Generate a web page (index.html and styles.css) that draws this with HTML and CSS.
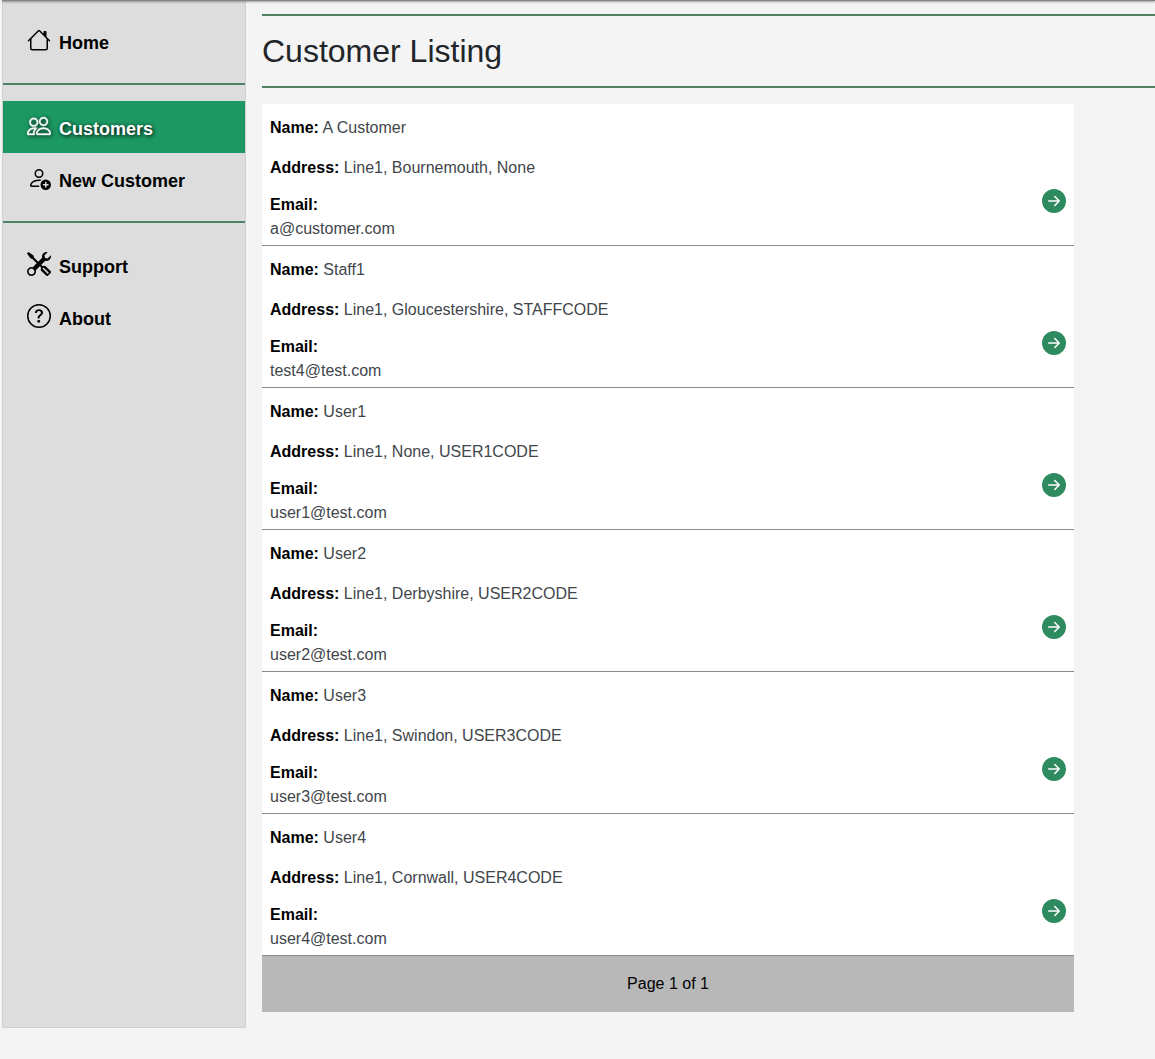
FILE: index.html
```html
<!DOCTYPE html>
<html lang="en">
<head>
<meta charset="utf-8">
<title>Customer Listing</title>
<link rel="stylesheet" href="styles.css">
</head>
<body>
<svg class="sprite" aria-hidden="true">
  <symbol id="arrow" viewBox="0 0 16 16"><path d="M8 0a8 8 0 1 1 0 16A8 8 0 0 1 8 0zM4.500 7.500a.5.5 0 0 0 0 1h5.793l-2.147 2.146a.5.5 0 0 0 .708.708l3-3a.5.5 0 0 0 0-.708l-3-3a.5.5 0 1 0-.708.708L10.293 7.500H4.500z"/></symbol>
</svg>
<div class="topbar"></div>
<div class="layout">
  <nav class="sidebar">
    <a class="nav-item"><svg class="icon" viewBox="0 0 16 16"><path d="M8.707 1.5a1 1 0 0 0-1.414 0L.646 8.146a.5.5 0 0 0 .708.708L2 8.207V13.500A1.500 1.500 0 0 0 3.500 15h9a1.500 1.500 0 0 0 1.500-1.500V8.207l.646.647a.5.5 0 0 0 .708-.708L13 5.793V2.500a.5.5 0 0 0-.5-.5h-1a.5.5 0 0 0-.5.5v1.293L8.707 1.500ZM13 7.207V13.500a.5.5 0 0 1-.5.5h-9a.5.5 0 0 1-.5-.5V7.207l5-5 5 5Z"/></svg><span>Home</span></a>
    <hr class="rule">
    <a class="nav-item active"><svg class="icon" viewBox="0 0 16 16"><path d="M15 14s1 0 1-1-1-4-5-4-5 3-5 4 1 1 1 1h8Zm-7.978-1A.261.261 0 0 1 7 12.996c.001-.264.167-1.030.76-1.720C8.312 10.629 9.282 10 11 10c1.717 0 2.687.63 3.240 1.276.593.69.758 1.457.76 1.720l-.008.002a.274.274 0 0 1-.014.002H7.022ZM11 7a2 2 0 1 0 0-4 2 2 0 0 0 0 4Zm3-2a3 3 0 1 1-6 0 3 3 0 0 1 6 0ZM6.936 9.280a5.880 5.880 0 0 0-1.230-.247A7.350 7.350 0 0 0 5 9c-4 0-5 3-5 4 0 .667.333 1 1 1h4.216A2.238 2.238 0 0 1 5 13c0-1.010.377-2.042 1.090-2.904.243-.294.526-.569.846-.816ZM4.920 10A5.493 5.493 0 0 0 4 13H1c0-.26.164-1.030.76-1.724.545-.636 1.492-1.256 3.160-1.275ZM1.500 5.500a3 3 0 1 1 6 0 3 3 0 0 1-6 0Zm3-2a2 2 0 1 0 0 4 2 2 0 0 0 0-4Z"/></svg><span>Customers</span></a>
    <a class="nav-item"><svg class="icon" viewBox="0 0 16 16"><path d="M12.500 16a3.500 3.500 0 1 0 0-7 3.500 3.500 0 0 0 0 7Zm.5-5v1h1a.5.5 0 0 1 0 1h-1v1a.5.5 0 0 1-1 0v-1h-1a.5.5 0 0 1 0-1h1v-1a.5.5 0 0 1 1 0Zm-2-6a3 3 0 1 1-6 0 3 3 0 0 1 6 0ZM8 7a2 2 0 1 0 0-4 2 2 0 0 0 0 4Z"/><path d="M8.256 14a4.474 4.474 0 0 1-.229-1.004H3c.001-.246.154-.986.832-1.664C4.484 10.680 5.711 10 8 10c.26 0 .507.009.74.025.226-.341.496-.65.804-.918C9.077 9.038 8.564 9 8 9c-5 0-6 3-6 4s1 1 1 1h5.256Z"/></svg><span>New Customer</span></a>
    <hr class="rule">
    <a class="nav-item"><svg class="icon" viewBox="0 0 16 16"><path d="M1 0 0 1l2.200 3.081a1 1 0 0 0 .815.419h.07a1 1 0 0 1 .708.293l2.675 2.675-2.617 2.654A3.003 3.003 0 0 0 0 13a3 3 0 1 0 5.878-.851l2.654-2.617.968.968-.305.914a1 1 0 0 0 .242 1.023l3.270 3.270a.997.997 0 0 0 1.414 0l1.586-1.586a.997.997 0 0 0 0-1.414l-3.270-3.270a1 1 0 0 0-1.023-.242L10.500 9.500l-.96-.96 2.680-2.643A3.005 3.005 0 0 0 16 3c0-.269-.035-.53-.102-.777l-2.140 2.141L12 4l-.364-1.757L13.777.102a3 3 0 0 0-3.675 3.680L7.462 6.460 4.793 3.793a1 1 0 0 1-.293-.707v-.071a1 1 0 0 0-.419-.814L1 0Zm9.646 10.646a.5.5 0 0 1 .708 0l2.914 2.915a.5.5 0 0 1-.707.707l-2.915-2.914a.5.5 0 0 1 0-.708ZM3 11l.471.242.529.026.287.445.445.287.026.529L5 13l-.242.471-.026.529-.445.287-.287.445-.529.026L3 15l-.471-.242L2 14.732l-.287-.445L1.268 14l-.026-.529L1 13l.242-.471.026-.529.445-.287.287-.445.529-.026L3 11Z"/></svg><span>Support</span></a>
    <a class="nav-item"><svg class="icon" viewBox="0 0 16 16"><path d="M8 15A7 7 0 1 1 8 1a7 7 0 0 1 0 14zm0 1A8 8 0 1 0 8 0a8 8 0 0 0 0 16z"/><path d="M5.255 5.786a.237.237 0 0 0 .241.247h.825c.138 0 .248-.113.266-.25.09-.656.54-1.134 1.342-1.134.686 0 1.314.343 1.314 1.168 0 .635-.374.927-.965 1.371-.673.489-1.206 1.060-1.168 1.987l.003.217a.25.25 0 0 0 .25.246h.811a.25.25 0 0 0 .25-.25v-.105c0-.718.273-.927 1.010-1.486.609-.463 1.244-.977 1.244-2.056 0-1.511-1.276-2.241-2.673-2.241-1.267 0-2.655.59-2.750 2.286zm1.557 5.763c0 .533.425.927 1.010.927.609 0 1.028-.394 1.028-.927 0-.552-.42-.94-1.029-.94-.584 0-1.009.388-1.009.94z"/></svg><span>About</span></a>
  </nav>
  <main class="content">
    <header class="page-head"><h1>Customer Listing</h1></header>
    <section class="listing">
      <article class="customer">
        <div><p class="field"><b>Name:</b> A Customer</p><p class="field"><b>Address:</b> Line1, Bournemouth, None</p><p class="email"><b>Email:</b><br>a@customer.com</p></div>
        <svg class="go"><use href="#arrow"/></svg>
      </article>
      <article class="customer">
        <div><p class="field"><b>Name:</b> Staff1</p><p class="field"><b>Address:</b> Line1, Gloucestershire, STAFFCODE</p><p class="email"><b>Email:</b><br>test4@test.com</p></div>
        <svg class="go"><use href="#arrow"/></svg>
      </article>
      <article class="customer">
        <div><p class="field"><b>Name:</b> User1</p><p class="field"><b>Address:</b> Line1, None, USER1CODE</p><p class="email"><b>Email:</b><br>user1@test.com</p></div>
        <svg class="go"><use href="#arrow"/></svg>
      </article>
      <article class="customer">
        <div><p class="field"><b>Name:</b> User2</p><p class="field"><b>Address:</b> Line1, Derbyshire, USER2CODE</p><p class="email"><b>Email:</b><br>user2@test.com</p></div>
        <svg class="go"><use href="#arrow"/></svg>
      </article>
      <article class="customer">
        <div><p class="field"><b>Name:</b> User3</p><p class="field"><b>Address:</b> Line1, Swindon, USER3CODE</p><p class="email"><b>Email:</b><br>user3@test.com</p></div>
        <svg class="go"><use href="#arrow"/></svg>
      </article>
      <article class="customer">
        <div><p class="field"><b>Name:</b> User4</p><p class="field"><b>Address:</b> Line1, Cornwall, USER4CODE</p><p class="email"><b>Email:</b><br>user4@test.com</p></div>
        <svg class="go"><use href="#arrow"/></svg>
      </article>
      <footer class="pager">Page 1 of 1</footer>
    </section>
  </main>
</div>
</body>
</html>
```

FILE: styles.css
```css
* {
  box-sizing: border-box;
}

body {
  margin: 0;
  background: #f4f4f4;
  color: #212529;
  font: 16px/24px "Liberation Sans", Arial, sans-serif;
  overflow: hidden;
}

.sprite {
  display: none;
}

.topbar {
  position: relative;
  height: 1px;
  margin-left: 2px;
  background: #848484;
  box-shadow: 0 1px 2px rgba(0, 0, 0, 0.5);
}

.layout {
  display: flex;
  gap: 16px;
  padding-left: 2px;
}

.sidebar {
  flex: none;
  width: 244px;
  height: 1027px;
  padding-top: 14px;
  background: #ddd;
  border: 1px solid #d0d0d0;
  border-top: 0;
}

.nav-item {
  display: flex;
  gap: 8px;
  height: 52px;
  padding: 13px 24px 0;
  color: #000;
  font-size: 18px;
  font-weight: bold;
  line-height: 30px;
}

.icon {
  flex: none;
  width: 24px;
  height: 24px;
  fill: currentColor;
}

.active {
  background: #1c9963;
  color: #fff;
  text-shadow: 1px 1px 4px #000;
}

.active .icon {
  stroke: currentColor;
  stroke-width: 0.25;
  filter: drop-shadow(1px 1px 2px rgba(0, 0, 0, 0.8));
}

.rule {
  height: 2px;
  margin: 16px 0;
  border: 0;
  background: #528265;
}

.content {
  flex: 1;
  padding-top: 13px;
}

.page-head {
  height: 74px;
  border: solid #528265;
  border-width: 2px 0;
}

h1 {
  margin: 0;
  padding-top: 16px;
  font-size: 32px;
  font-weight: normal;
  line-height: 38px;
}

.listing {
  width: 812px;
  margin-top: 16px;
}

.customer {
  display: flex;
  align-items: center;
  justify-content: space-between;
  height: 142px;
  padding: 0 8px;
  background: #fff;
  border-bottom: 1px solid #888c8a;
  color: #41464b;
}

.customer p {
  margin: 0;
}

.customer b {
  color: #000;
}

.customer .field {
  padding: 8px 0;
}

.customer .email {
  padding: 5px 0 0;
}

.go {
  flex: none;
  width: 24px;
  height: 24px;
  margin-top: 53px;
  fill: #2d8b5f;
}

.pager {
  height: 56px;
  padding-top: 16px;
  background: #b8b8b8;
  color: #000;
  text-align: center;
}
```
